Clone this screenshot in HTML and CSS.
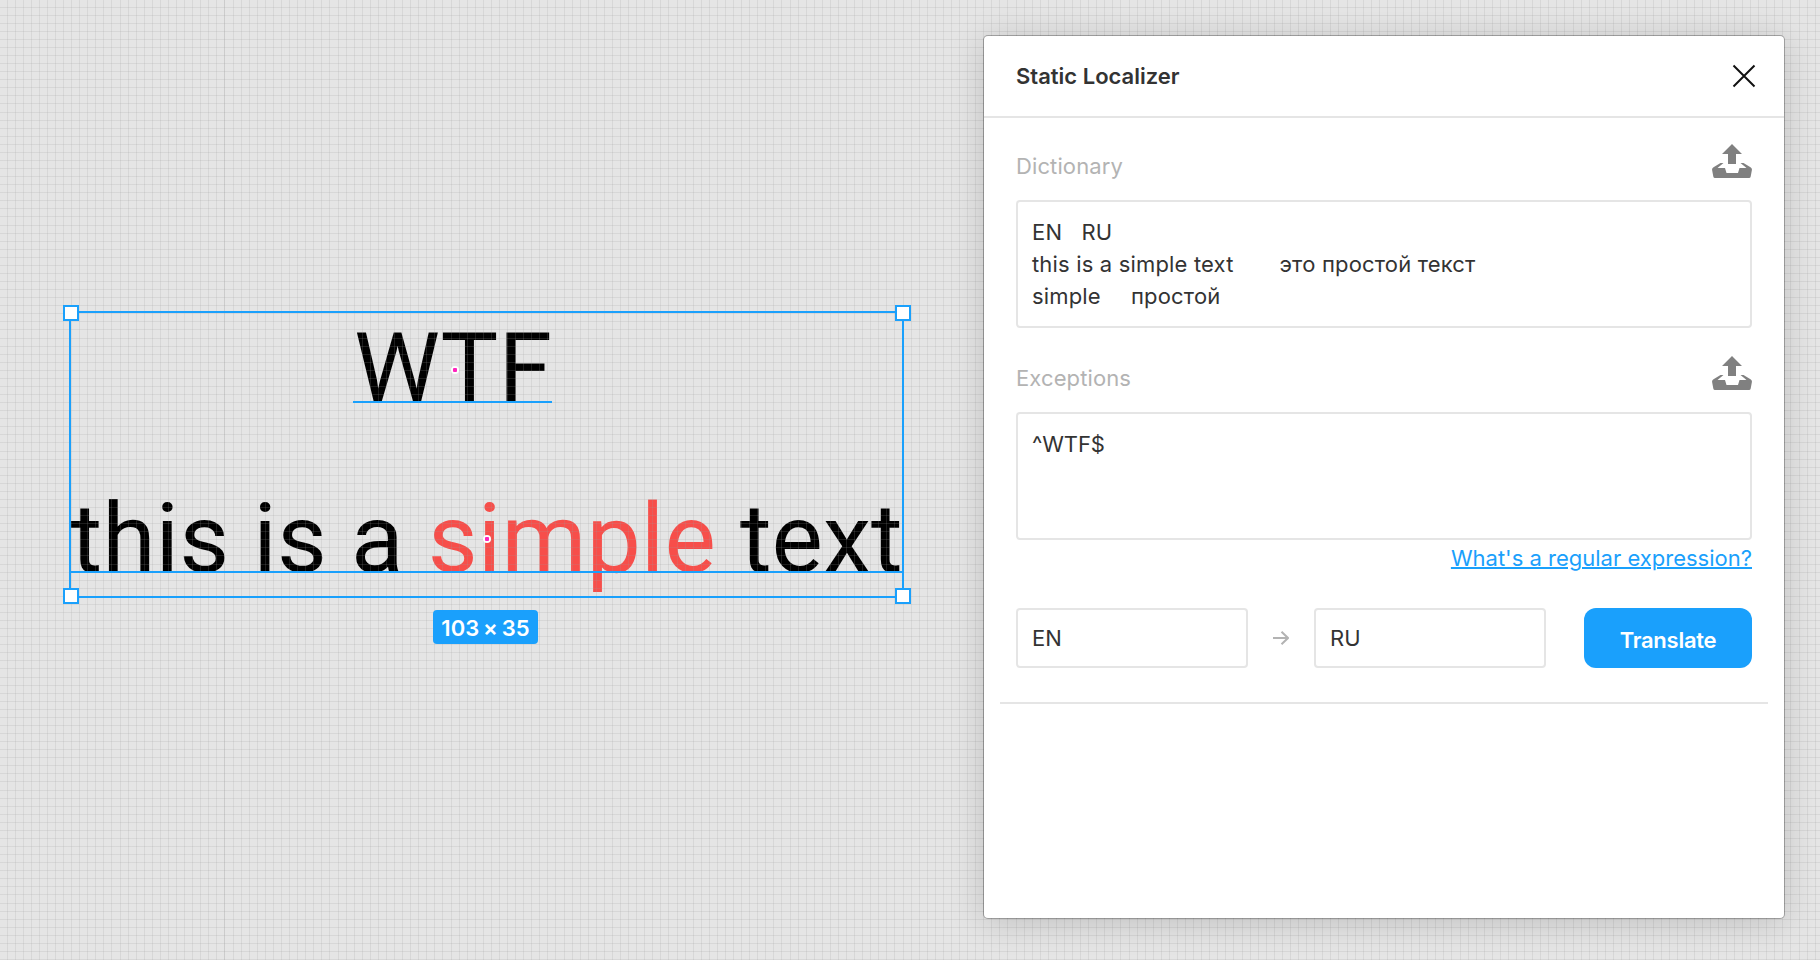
FILE: index.html
```html
<!DOCTYPE html>
<html lang="en">
<head>
<meta charset="utf-8">
<title>Static Localizer</title>
<link rel="stylesheet" href="styles.css">
</head>
<body>
<main class="canvas">
  <div class="layer layer-wtf">WTF</div>
  <div class="layer layer-text">this is a <span class="accent">simple</span> text</div>
  <div class="grid"></div>
  <div class="baseline baseline-wtf"></div>
  <div class="baseline baseline-text"></div>
  <div class="selection"></div>
  <i class="handle tl"></i><i class="handle tr"></i><i class="handle bl"></i><i class="handle br"></i>
  <i class="pin pin-wtf"></i><i class="pin pin-text"></i>
  <div class="size-badge">103 × 35</div>

  <section class="panel">
    <header class="panel-header">
      <h1 class="title">Static Localizer</h1>
      <svg class="close" width="24" height="24" viewBox="0 0 24 24"><path d="M1.5 1.5 22.5 22.5M22.5 1.5 1.5 22.5" fill="none" stroke="#111" stroke-width="2"/></svg>
    </header>
    <div class="panel-body">
      <div class="field-head">
        <span class="label">Dictionary</span>
        <svg class="upload" width="40" height="34" viewBox="0 0 40 34"><path d="M20 0 30 10H24V20H16V10H10ZM8.5 19H11.5L5.500 24H13L14.5 29H26L27.5 24H34.500L28.500 19H31.500L38.500 23.200Q40.200 24.400 39.900 26L38.700 32.500Q38.400 34 37 34H3Q1.600 34 1.300 32.500L.1 26Q-.2 24.400 1.500 23.200Z"/></svg>
      </div>
      <div class="area">EN&#9;RU
this is a simple text&#9;это простой текст
simple&#9;простой</div>
      <div class="field-head second">
        <span class="label">Exceptions</span>
        <svg class="upload" width="40" height="34" viewBox="0 0 40 34"><path d="M20 0 30 10H24V20H16V10H10ZM8.5 19H11.5L5.500 24H13L14.5 29H26L27.5 24H34.500L28.500 19H31.500L38.500 23.200Q40.200 24.400 39.900 26L38.700 32.500Q38.400 34 37 34H3Q1.600 34 1.300 32.500L.1 26Q-.2 24.400 1.500 23.200Z"/></svg>
      </div>
      <div class="area patterns">^WTF$</div>
      <a class="help">What's a regular expression?</a>
      <div class="actions">
        <div class="lang">EN</div>
        <svg class="arrow" width="16" height="14" viewBox="0 0 16 14"><path d="M0 7H15M8.500.7 15 7 8.500 13.300" fill="none" stroke="#b3b3b3" stroke-width="2"/></svg>
        <div class="lang">RU</div>
        <div class="translate">Translate</div>
      </div>
    </div>
    <div class="divider"></div>
  </section>
</main>
</body>
</html>
```
FILE: styles.css
```css
body { margin: 0; font-family: Inter, "Liberation Sans", sans-serif; font-size: 22px; color: #333; }
.canvas { position: relative; width: 1820px; height: 960px; overflow: hidden; background: #e5e5e5; }

/* Canvas layers and the pixel grid drawn over them */
.layer { position: absolute; font: 400 96.86px/114px Roboto, sans-serif; color: #000; white-space: pre; }
.layer-wtf { left: 354px; top: 311px; transform: translateY(.4px); }
.layer-text { left: 70.5px; top: 481px; letter-spacing: .04px; transform: translateY(.5px); }
.accent { color: #f74e4a; }
.grid {
  position: absolute; inset: 0;
  background:
    linear-gradient(rgba(155, 155, 155, .19), rgba(155, 155, 155, .19)) 224px 0 / 1px 100% no-repeat,
    repeating-linear-gradient(to right, transparent 0 6.55px, rgba(155, 155, 155, .19) 6.55px 7.55px, transparent 7.55px 8.072px),
    repeating-linear-gradient(to bottom, transparent 0 6.566px, rgba(155, 155, 155, .19) 6.566px 7.566px, transparent 7.566px 8.072px);
}

/* Selection */
.baseline { position: absolute; height: 2px; background: #1aa0fc; }
.baseline-wtf { left: 353px; top: 401px; width: 199px; }
.baseline-text { left: 70px; top: 570.5px; width: 834px; }
.selection { position: absolute; box-sizing: border-box; left: 69px; top: 311px; width: 835px; height: 287px; border: 2px solid #1aa0fc; }
.handle { position: absolute; box-sizing: border-box; width: 16px; height: 16px; border: 2px solid #1aa0fc; background: #fff; }
.tl { left: 63px; top: 305px; }
.tr { left: 895px; top: 305px; }
.bl { left: 63px; top: 588px; }
.br { left: 895px; top: 588px; }
.pin { position: absolute; width: 8px; height: 8px; border-radius: 50%; background: radial-gradient(circle, #ff24bd 2px, #fff 2.5px); }
.pin-wtf { left: 450.5px; top: 365.5px; }
.pin-text { left: 482.7px; top: 535.3px; }
.size-badge { position: absolute; left: 433px; top: 610px; width: 105px; height: 34px; border-radius: 4px; background: #1aa0fc; color: #fff; font-weight: 600; letter-spacing: .1px; line-height: 36px; text-align: center; word-spacing: -2px; }

/* Plugin window */
.panel { position: absolute; left: 984px; top: 36px; width: 800px; height: 882px; border-radius: 4px; background: #fff; box-shadow: 0 0 0 1px rgba(0, 0, 0, .27), 0 4px 34px rgba(0, 0, 0, .17); letter-spacing: .11px; }
.panel-header { display: flex; align-items: center; justify-content: space-between; box-sizing: border-box; height: 82px; padding: 0 28px 0 32px; border-bottom: 2px solid #e5e5e5; }
.title { margin: 0; font-size: 22px; font-weight: 600; letter-spacing: 0; }
.panel-body { display: flex; flex-direction: column; padding: 26px 32px 34px; }
.field-head { display: flex; justify-content: space-between; height: 56px; }
.second { margin-top: 28px; }
.label { line-height: 44px; color: #b3b3b3; }
.upload { fill: #808080; }
.area { box-sizing: border-box; height: 128px; padding: 14px; border: 2px solid #e5e5e5; border-radius: 4px; line-height: 32px; white-space: pre; tab-size: 49.5px; letter-spacing: .17px; }
.patterns { letter-spacing: -.1px; }
.help { align-self: flex-end; margin-top: 2px; line-height: 32px; color: #1aa0fc; letter-spacing: 0; text-decoration: underline; text-decoration-thickness: 2px; }
.actions { display: flex; align-items: center; margin-top: 34px; }
.lang { box-sizing: border-box; width: 232px; height: 60px; padding: 0 14px; border: 2px solid #e5e5e5; border-radius: 4px; line-height: 56px; }
.arrow { margin: 0 25px; }
.translate { width: 168px; height: 60px; margin-left: 38px; border-radius: 12px; background: #1aa0fc; color: #fff; font-weight: 600; letter-spacing: -.25px; line-height: 64px; text-align: center; }
.divider { height: 2px; margin: 0 16px; background: #e5e5e5; }
```
